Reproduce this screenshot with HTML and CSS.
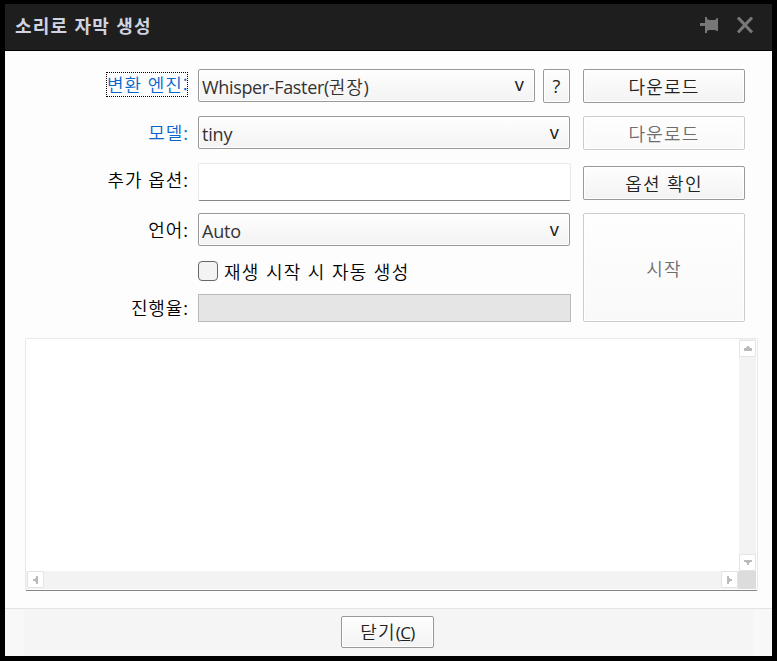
FILE: index.html
```html
<!DOCTYPE html>
<html lang="ko">
<head>
<meta charset="utf-8">
<title>소리로 자막 생성</title>
<link rel="stylesheet" href="styles.css">
</head>
<body>
<div class="window">
  <header class="titlebar">
    <h1 class="title">소리로 자막 생성</h1>
    <svg class="pin" width="19" height="17" viewBox="0 0 19 17"><path d="M0 7h5V1h2v2l2 1h6l2-2h1v13h-1l-2-1H9l-2 1v2H5V10H0z"/></svg>
    <svg class="close" width="16" height="16" viewBox="0 0 16 16"><path d="M1 0.5L15 15.5M15 0.5L1 15.5"/></svg>
  </header>
  <main class="content">
    <div class="form">
      <div class="label link"><span class="focused">변환 엔진:</span></div>
      <div class="field">
        <div class="select engine"><span><span class="latin">Whisper-Faster(</span>권장<span class="latin">)</span></span><span class="arrow">v</span></div>
        <button class="button help">?</button>
      </div>
      <button class="button">다운로드</button>

      <div class="label link">모델<span class="colon">:</span></div>
      <div class="select"><span class="latin">tiny</span><span class="arrow">v</span></div>
      <button class="button" disabled>다운로드</button>

      <div class="label">추가 옵션<span class="colon">:</span></div>
      <input class="input" type="text">
      <button class="button options">옵션 확인</button>

      <div class="label">언어<span class="colon">:</span></div>
      <div class="select"><span class="latin">Auto</span><span class="arrow">v</span></div>
      <button class="button start" disabled>시작</button>

      <label class="check"><span class="box"></span><span>재생 시작 시 자동 생성</span></label>

      <div class="label progress-label">진행율<span class="colon">:</span></div>
      <div class="progress"></div>
    </div>
    <div class="log">
      <div class="paper"></div>
      <div class="vbar">
        <span class="step"><svg width="8" height="5" viewBox="0 0 8 5"><path d="M3 0h2v1h1v1h2v3H0V2h2V1h1z"/></svg></span>
        <span class="step"><svg width="8" height="5" viewBox="0 0 8 5"><path d="M0 0h8v2H6v1H5v2H3V3H2V2H0z"/></svg></span>
      </div>
      <div class="hbar">
        <span class="step"><svg width="5" height="8" viewBox="0 0 5 8"><path d="M5 0v8H3V6H2V5H0V3h2V2h1V0z"/></svg></span>
        <span class="step"><svg width="5" height="8" viewBox="0 0 5 8"><path d="M0 0v8h2V6h1V5h2V3H3V2H2V0z"/></svg></span>
      </div>
      <div class="corner"></div>
    </div>
  </main>
  <footer class="footer">
    <button class="button dismiss">닫기<span class="key">(<u>C</u>)</span></button>
  </footer>
</div>
</body>
</html>
```
FILE: styles.css
```css
* { box-sizing: border-box; }

body {
  margin: 0;
  height: 661px;
  padding: 4px 5px 5px;
  background: #000;
  font: 18px/24px "Noto Sans CJK KR", sans-serif;
  font-weight: 350;
  letter-spacing: 1px;
  color: #000;
  overflow: hidden;
}

.window {
  display: flex;
  flex-direction: column;
  width: 767px;
  height: 652px;
  background: #fdfdfd;
}

.titlebar {
  display: flex;
  align-items: center;
  flex: none;
  height: 47px;
  padding: 0 19px 5px 10px;
  background: #1e1e1e;
  border-bottom: 1px solid #000;
}

.title {
  flex: 1;
  margin: 0;
  font-size: 18px;
  font-weight: 700;
  letter-spacing: 1.2px;
  color: #d0d3e0;
}

.pin { margin-right: 18px; fill: #777; }
.close { fill: none; stroke: #777; stroke-width: 3; }

.content {
  flex: 1;
  padding: 18px 14px 0 20px;
}

.form {
  display: grid;
  grid-template-columns: 163px 373px 162px;
  grid-template-rows: 47px 47px 50px 48px 33px 28px;
  column-gap: 10px;
  align-items: start;
}

.form > .button { margin-left: 2px; }

.label {
  padding-top: 4px;
  text-align: right;
  letter-spacing: 0.9px;
}

.colon {
  font-family: "Open Sans", sans-serif;
  font-weight: 400;
  letter-spacing: 0;
}

.link { color: #0b66cc; }

.focused {
  display: inline-block;
  width: 82px;
  height: 25px;
  margin-top: -1px;
  padding-left: 1px;
  outline: 1px dotted #000;
  outline-offset: -1px;
  text-align: left;
  white-space: nowrap;
  overflow: hidden;
}

.field {
  display: flex;
  gap: 8px;
  width: 372px;
}

.select {
  display: flex;
  justify-content: space-between;
  align-items: center;
  width: 372px;
  height: 33px;
  padding: 3px 10px 0 3px;
  border: 1px solid #999;
  border-radius: 2px;
  background: linear-gradient(#fefefe, #f3f3f3);
  box-shadow: inset 0 0 0 1px #fff;
  color: #333;
}

.engine {
  width: 337px;
  padding-top: 2px;
  letter-spacing: 0.8px;
}

.latin {
  font-family: "Open Sans", sans-serif;
  font-weight: 400;
  letter-spacing: -0.2px;
}

.engine .latin { letter-spacing: -0.35px; }

.arrow {
  margin-top: -5px;
  font-family: "Noto Sans", sans-serif;
  font-weight: 400;
  letter-spacing: 0;
  color: #222;
}

.button {
  width: 162px;
  height: 34px;
  padding: 0;
  border: 1px solid #999;
  border-radius: 2px;
  background: linear-gradient(#fefefe, #f3f3f3);
  box-shadow: inset 0 0 0 1px #fff;
  font: inherit;
  letter-spacing: 1.2px;
  color: #222;
}

.button:disabled {
  border-color: #ccc;
  background: linear-gradient(#fefefe, #f9f9f9);
  color: #6d6d6d;
}

.help {
  width: 27px;
  font-family: "Open Sans", sans-serif;
  font-weight: 400;
  letter-spacing: 0;
}

.options { margin-top: 3px; }

.start {
  grid-row: 4 / 7;
  grid-column: 3;
  height: 109px;
}

.input {
  width: 373px;
  height: 38px;
  border: 1px solid #e9e9e9;
  border-bottom-color: #858585;
  border-radius: 2px;
  background: #fff;
}

.check {
  grid-column: 2;
  display: flex;
  align-items: center;
  gap: 6px;
  height: 20px;
  letter-spacing: 1.25px;
}

.box {
  width: 20px;
  height: 20px;
  border: 1px solid #666;
  border-radius: 4px;
  background: #f3f3f3;
}

.progress-label { padding-top: 1px; }

.progress {
  height: 28px;
  border: 1px solid #bababa;
  background: #e5e5e5;
}

.log {
  display: grid;
  grid-template-columns: 1fr 17px;
  grid-template-rows: 1fr 18px;
  width: 733px;
  height: 253px;
  margin-top: 16px;
  padding: 0 1px 1px 0;
  border: 1px solid #e9e9e9;
  border-bottom-color: #858585;
  border-radius: 2px;
  background: #fff;
}

.vbar, .hbar {
  display: flex;
  justify-content: space-between;
  background: #f3f3f3;
}

.vbar { flex-direction: column; padding-top: 1px; }
.hbar { padding: 0 1px; }

.step {
  display: flex;
  align-items: center;
  justify-content: center;
  width: 17px;
  height: 17px;
  border: 1px solid #e3e3e3;
  border-radius: 2px;
  background: #fff;
  fill: #bbb;
}

.corner {
  margin-left: -1px;
  background: #dcdcdc;
}

.footer {
  display: flex;
  justify-content: center;
  flex: none;
  height: 48px;
  padding: 7px 2px 0 0;
  border-top: 1px solid #e3e3e3;
  background: linear-gradient(90deg, #f8f8f8 19px, #f5f5f5 19px 748px, #f8f8f8 748px);
}

.dismiss {
  width: 93px;
  height: 32px;
}

.key {
  font-family: "Open Sans", sans-serif;
  font-weight: 400;
  font-size: 17px;
  letter-spacing: -0.6px;
}
```
